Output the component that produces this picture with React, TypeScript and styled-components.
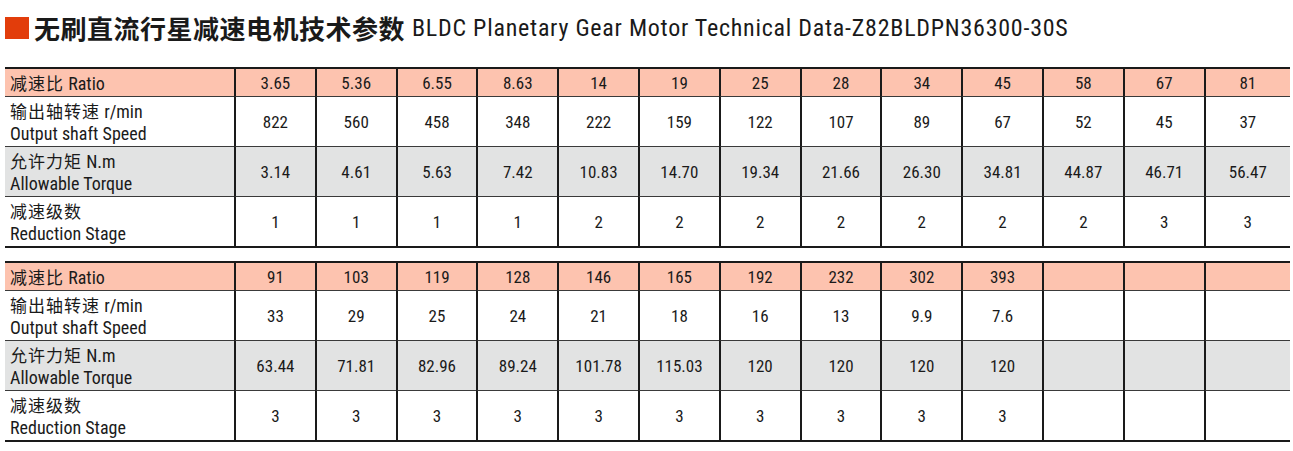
import styled, { createGlobalStyle } from "styled-components";

const narrow = `"Roboto", "Noto Sans CJK SC", sans-serif`;

const GlobalStyle = createGlobalStyle`
  body {
    margin: 0;
    background: #ffffff;
    color: #1a1a1a;
    font-family: ${narrow};
    font-stretch: condensed;
  }
`;

const Page = styled.div`
  width: 1293px;
  padding: 17px 3px 0 5px;
  box-sizing: border-box;
`;

const TitleBar = styled.div`
  display: flex;
  align-items: center;
  height: 22px;
  margin-bottom: 28px;
`;

const Square = styled.span`
  width: 24px;
  height: 22px;
  background: #e23d0b;
  margin-right: 5px;
  flex: none;
`;

const TitleCn = styled.span`
  font-family: "Noto Sans CJK SC", sans-serif;
  font-weight: 700;
  font-size: 26px;
  letter-spacing: 0.5px;
  line-height: 1;
`;

const TitleEn = styled.span`
  font-family: ${narrow};
  font-stretch: condensed;
  font-size: 24px;
  letter-spacing: 0.75px;
  margin-left: 7px;
  line-height: 1;
`;

const Grid = styled.div`
  display: grid;
  width: 1285px;
  grid-template-columns: 229px repeat(12, 80.8px) 1fr;
  grid-template-rows: 30px 50px 50px 51px;
  & + & {
    margin-top: 13px;
  }
`;

const Cell = styled.div<{ $tone: "pink" | "white" | "gray"; $first?: boolean; $last?: boolean; $label?: boolean }>`
  box-sizing: border-box;
  display: flex;
  flex-direction: column;
  justify-content: center;
  align-items: ${(p) => (p.$label ? "flex-start" : "center")};
  padding-left: ${(p) => (p.$label ? "5px" : "0")};
  padding-top: 1px;
  background: ${(p) => (p.$tone === "pink" ? "#fdc3af" : p.$tone === "gray" ? "#e2e3e3" : "#ffffff")};
  border-top: ${(p) => (p.$first ? "2px solid #1a1a1a" : "none")};
  border-bottom: ${(p) => (p.$last ? "2px solid #1a1a1a" : "1px solid #3a3a3a")};
  border-left: ${(p) => (p.$label ? "none" : "2px solid #1a1a1a")};
  font-size: 17px;
  font-stretch: condensed;
  line-height: 22px;
  white-space: nowrap;
`;

const Cn = styled.span`
  font-family: "Noto Sans CJK SC", sans-serif;
  font-size: 17px;
  letter-spacing: 1px;
`;

const En = styled.span`
  font-family: ${narrow};
  font-stretch: condensed;
  font-size: 18px;
`;

type Row = { cn: string; en: string; second?: string; values: string[] };

const tone = (i: number) => (i === 0 ? "pink" : i === 2 ? "gray" : "white");

const pad = (v: string[]) => [...v, ...Array(13 - v.length).fill("")];

const tables: Row[][] = [
  [
    { cn: "减速比", en: "Ratio", values: ["3.65", "5.36", "6.55", "8.63", "14", "19", "25", "28", "34", "45", "58", "67", "81"] },
    { cn: "输出轴转速", en: "r/min", second: "Output shaft Speed", values: ["822", "560", "458", "348", "222", "159", "122", "107", "89", "67", "52", "45", "37"] },
    { cn: "允许力矩", en: "N.m", second: "Allowable Torque", values: ["3.14", "4.61", "5.63", "7.42", "10.83", "14.70", "19.34", "21.66", "26.30", "34.81", "44.87", "46.71", "56.47"] },
    { cn: "减速级数", en: "", second: "Reduction Stage", values: ["1", "1", "1", "1", "2", "2", "2", "2", "2", "2", "2", "3", "3"] },
  ],
  [
    { cn: "减速比", en: "Ratio", values: pad(["91", "103", "119", "128", "146", "165", "192", "232", "302", "393"]) },
    { cn: "输出轴转速", en: "r/min", second: "Output shaft Speed", values: pad(["33", "29", "25", "24", "21", "18", "16", "13", "9.9", "7.6"]) },
    { cn: "允许力矩", en: "N.m", second: "Allowable Torque", values: pad(["63.44", "71.81", "82.96", "89.24", "101.78", "115.03", "120", "120", "120", "120"]) },
    { cn: "减速级数", en: "", second: "Reduction Stage", values: pad(Array(10).fill("3")) },
  ],
];

function DataTable({ rows }: { rows: Row[] }) {
  return (
    <Grid>
      {rows.map((row, i) => {
        const first = i === 0;
        const last = i === rows.length - 1;
        return [
          <Cell key={`l${i}`} $tone={tone(i)} $first={first} $last={last} $label>
            <div>
              <Cn>{row.cn}</Cn>
              {row.en && <En> {row.en}</En>}
            </div>
            {row.second && <En>{row.second}</En>}
          </Cell>,
          ...row.values.map((v, j) => (
            <Cell key={`${i}-${j}`} $tone={tone(i)} $first={first} $last={last}>
              {v}
            </Cell>
          )),
        ];
      })}
    </Grid>
  );
}

export default function App() {
  return (
    <>
      <GlobalStyle />
      <Page>
        <TitleBar>
          <Square />
          <TitleCn>无刷直流行星减速电机技术参数</TitleCn>
          <TitleEn>BLDC Planetary Gear Motor Technical Data-Z82BLDPN36300-30S</TitleEn>
        </TitleBar>
        {tables.map((rows, i) => (
          <DataTable key={i} rows={rows} />
        ))}
      </Page>
    </>
  );
}
